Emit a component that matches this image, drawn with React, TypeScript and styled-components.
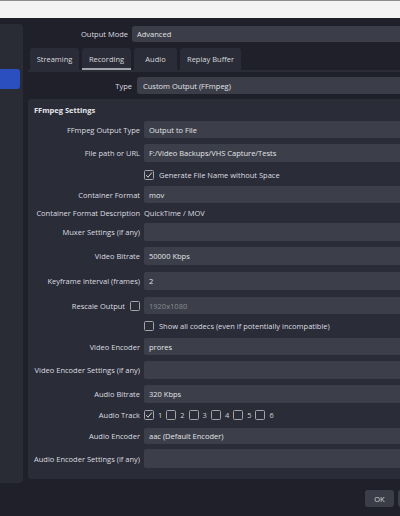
import React from 'react';
import styled, { createGlobalStyle } from 'styled-components';

const Global = createGlobalStyle`
  html, body { margin: 0; padding: 0; background: #1f2029; }
  body {
    font-family: "Open Sans", "Noto Sans", sans-serif;
    font-size: 7.5px;
    color: #dcdde0;
  }
  * { box-sizing: border-box; }
`;

const Page = styled.div`
  width: 400px;
  height: 516px;
  display: flex;
  flex-direction: column;
  overflow: hidden;
  background: #1f2029;
`;

const TitleStrip = styled.div`
  flex: none;
  height: 18px;
  background: #f3f3f3;
  border-top: 1px solid #8d8d8d;
`;

const Body = styled.div`
  flex: none;
  height: 465px;
  display: flex;
`;

const Sidebar = styled.div`
  flex: none;
  width: 23px;
  height: 459px;
  margin-top: 6px;
  padding-top: 45px;
  background: #292b35;
  border-radius: 0 4px 4px 0;
`;

const SidebarItem = styled.div`
  width: 20px;
  height: 20px;
  background: #2b4fbf;
  border-radius: 0 3px 3px 0;
`;

const Main = styled.div`
  flex: 1;
  min-width: 0;
  margin-left: 5px;
  padding-top: 8px;
  display: flex;
  flex-direction: column;
`;

const FormRow = styled.div<{ $h: number; $gap: number }>`
  display: flex;
  align-items: center;
  height: ${(p) => p.$h}px;
  gap: ${(p) => p.$gap}px;
`;

const FormLabel = styled.div<{ $w: number }>`
  flex: none;
  width: ${(p) => p.$w}px;
  text-align: right;
  white-space: nowrap;
`;

const Combo = styled.div<{ $pad: number }>`
  flex: 1;
  height: 100%;
  display: flex;
  align-items: center;
  padding-left: ${(p) => p.$pad}px;
  background: #3b3e49;
  border-radius: 3px 0 0 3px;
  color: #e2e3e6;
  white-space: nowrap;
  overflow: hidden;
`;

const TabBar = styled.div`
  display: flex;
  gap: 3px;
  height: 22px;
  margin-top: 6px;
  padding-left: 2px;
`;

const Tab = styled.div<{ $w: number; $active?: boolean }>`
  flex: none;
  width: ${(p) => p.$w}px;
  display: flex;
  align-items: center;
  justify-content: center;
  background: #2a2c37;
  border-radius: 3px 3px 0 0;
  border-bottom: 2px solid ${(p) => (p.$active ? '#a3a5aa' : 'transparent')};
  padding-top: 2px;
  color: #d9dadd;
  white-space: nowrap;
`;

const TabLine = styled.div`
  height: 2px;
  background: #2a2c36;
`;

const Pane = styled.div`
  padding-top: 5px;
  display: flex;
  flex-direction: column;
`;

const Group = styled.div`
  margin-top: 5px;
  height: 380px;
  padding: 5px 0 0 6px;
  background: #2a2c37;
  border-radius: 3px 0 0 3px;
  display: flex;
  flex-direction: column;
`;

const GroupTitle = styled.div`
  height: 12px;
  line-height: 12px;
  margin-bottom: 5px;
  font-weight: 700;
  color: #e6e7ea;
`;

const Row = styled.div<{ $slot: number }>`
  flex: none;
  height: ${(p) => p.$slot}px;
  display: flex;
  align-items: flex-start;
  gap: 4px;
`;

const LabelCell = styled.div<{ $h: number }>`
  flex: none;
  width: 106px;
  height: ${(p) => p.$h}px;
  display: flex;
  align-items: center;
  justify-content: flex-end;
  gap: 5px;
  white-space: nowrap;
`;

const Field = styled.div<{ $h: number; $disabled?: boolean }>`
  flex: 1;
  height: ${(p) => p.$h}px;
  display: flex;
  align-items: center;
  padding-left: 5px;
  background: #3c3f4a;
  border-radius: 2px 0 0 2px;
  color: ${(p) => (p.$disabled ? '#888a90' : '#e2e3e6')};
  white-space: nowrap;
  overflow: hidden;
`;

const PlainValue = styled.div`
  height: 12px;
  line-height: 12px;
  white-space: nowrap;
`;

const CheckLine = styled.div<{ $gap: number }>`
  height: 12px;
  display: flex;
  align-items: center;
  gap: ${(p) => p.$gap}px;
  white-space: nowrap;
`;

const Box = styled.span`
  flex: none;
  width: 10px;
  height: 10px;
  border: 1px solid #a2a4aa;
  border-radius: 1.5px;
  display: flex;
  align-items: center;
  justify-content: center;
`;

const TrackItem = styled.div`
  display: flex;
  align-items: center;
  gap: 4px;
  color: #d0d1d4;
`;

const Footer = styled.div`
  flex: 1;
  display: flex;
  justify-content: flex-end;
  align-items: flex-start;
  padding-top: 7px;
  overflow: hidden;
`;

const FooterButtons = styled.div`
  display: flex;
  gap: 4px;
  margin-right: -38px;
`;

const Button = styled.div<{ $w: number }>`
  width: ${(p) => p.$w}px;
  height: 17px;
  display: flex;
  align-items: center;
  justify-content: center;
  background: #3b3e49;
  border-radius: 3px;
  color: #d3d4d7;
`;

const CheckBox: React.FC<{ checked?: boolean }> = ({ checked }) => (
  <Box>
    {checked && (
      <svg width="8" height="8" viewBox="0 0 8 8">
        <polyline points="1.2,4.2 3,6.2 6.8,1.6" fill="none" stroke="#d4d5d8" strokeWidth="1" />
      </svg>
    )}
  </Box>
);

type RowDef =
  | { kind: 'field'; label: string; value: string; slot: number; fh: number; disabled?: boolean; box?: boolean }
  | { kind: 'check'; text: string; checked?: boolean; slot: number }
  | { kind: 'text'; label: string; value: string; slot: number }
  | { kind: 'tracks'; label: string; slot: number };

const rows: RowDef[] = [
  { kind: 'field', label: 'FFmpeg Output Type', value: 'Output to File', slot: 23, fh: 17 },
  { kind: 'field', label: 'File path or URL', value: 'F:/Video Backups/VHS Capture/Tests', slot: 25, fh: 18 },
  { kind: 'check', text: 'Generate File Name without Space', checked: true, slot: 17 },
  { kind: 'field', label: 'Container Format', value: 'mov', slot: 21, fh: 17 },
  { kind: 'text', label: 'Container Format Description', value: 'QuickTime / MOV', slot: 16 },
  { kind: 'field', label: 'Muxer Settings (if any)', value: '', slot: 24, fh: 18 },
  { kind: 'field', label: 'Video Bitrate', value: '50000 Kbps', slot: 25, fh: 18 },
  { kind: 'field', label: 'Keyframe interval (frames)', value: '2', slot: 25, fh: 18 },
  { kind: 'field', label: 'Rescale Output', value: '1920x1080', slot: 23, fh: 17, disabled: true, box: true },
  { kind: 'check', text: 'Show all codecs (even if potentially incompatible)', slot: 18 },
  { kind: 'field', label: 'Video Encoder', value: 'prores', slot: 23, fh: 17 },
  { kind: 'field', label: 'Video Encoder Settings (if any)', value: '', slot: 24, fh: 18 },
  { kind: 'field', label: 'Audio Bitrate', value: '320 Kbps', slot: 24, fh: 18 },
  { kind: 'tracks', label: 'Audio Track', slot: 19 },
  { kind: 'field', label: 'Audio Encoder', value: 'aac (Default Encoder)', slot: 21, fh: 16 },
  { kind: 'field', label: 'Audio Encoder Settings (if any)', value: '', slot: 20, fh: 19 },
];

const SettingsRow: React.FC<{ row: RowDef }> = ({ row }) => {
  switch (row.kind) {
    case 'field':
      return (
        <Row $slot={row.slot}>
          <LabelCell $h={row.fh}>
            <span>{row.label}</span>
            {row.box && <CheckBox />}
          </LabelCell>
          <Field $h={row.fh} $disabled={row.disabled}>
            {row.value}
          </Field>
        </Row>
      );
    case 'check':
      return (
        <Row $slot={row.slot}>
          <LabelCell $h={12} />
          <CheckLine $gap={5}>
            <CheckBox checked={row.checked} />
            <span>{row.text}</span>
          </CheckLine>
        </Row>
      );
    case 'text':
      return (
        <Row $slot={row.slot}>
          <LabelCell $h={12}>{row.label}</LabelCell>
          <PlainValue>{row.value}</PlainValue>
        </Row>
      );
    case 'tracks':
      return (
        <Row $slot={row.slot}>
          <LabelCell $h={12}>{row.label}</LabelCell>
          <CheckLine $gap={4}>
            {[1, 2, 3, 4, 5, 6].map((n) => (
              <TrackItem key={n}>
                <CheckBox checked={n === 1} />
                <span>{n}</span>
              </TrackItem>
            ))}
          </CheckLine>
        </Row>
      );
  }
};

export default function App() {
  return (
    <>
      <Global />
      <Page>
        <TitleStrip />
        <Body>
          <Sidebar>
            <SidebarItem />
          </Sidebar>
          <Main>
            <FormRow $h={16} $gap={4}>
              <FormLabel $w={100}>Output Mode</FormLabel>
              <Combo $pad={5}>Advanced</Combo>
            </FormRow>
            <TabBar>
              <Tab $w={49}>Streaming</Tab>
              <Tab $w={49} $active>Recording</Tab>
              <Tab $w={43}>Audio</Tab>
              <Tab $w={61}>Replay Buffer</Tab>
            </TabBar>
            <TabLine />
            <Pane>
              <FormRow $h={17} $gap={5}>
                <FormLabel $w={104}>Type</FormLabel>
                <Combo $pad={6}>Custom Output (FFmpeg)</Combo>
              </FormRow>
              <Group>
                <GroupTitle>FFmpeg Settings</GroupTitle>
                {rows.map((r, i) => (
                  <SettingsRow key={i} row={r} />
                ))}
              </Group>
            </Pane>
          </Main>
        </Body>
        <Footer>
          <FooterButtons>
            <Button $w={29}>OK</Button>
            <Button $w={40} />
          </FooterButtons>
        </Footer>
      </Page>
    </>
  );
}
